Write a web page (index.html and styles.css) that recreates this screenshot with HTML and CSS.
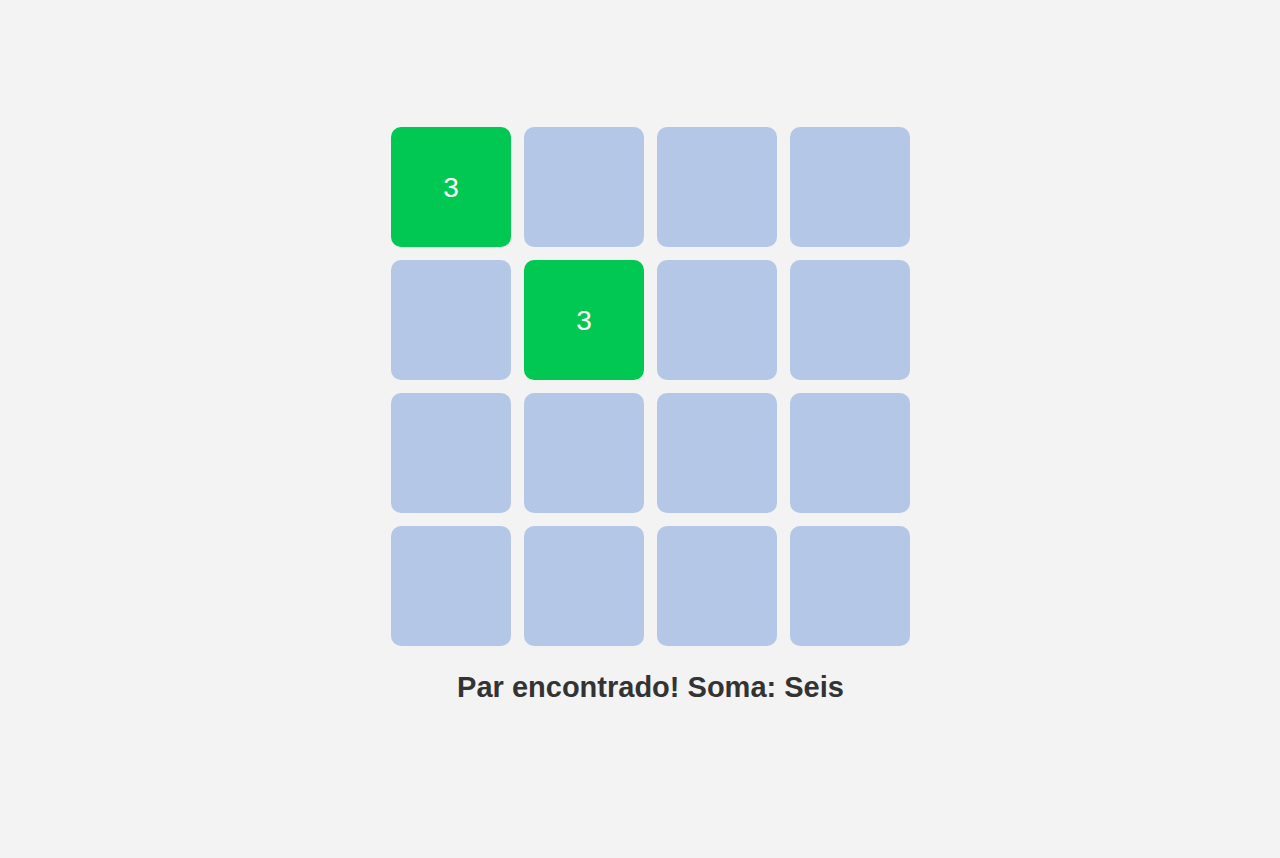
FILE: index.html
```html
<!DOCTYPE html>
<html lang="pt">
<head>
<meta charset="utf-8">
<title>Jogo da Memória</title>
<link rel="stylesheet" href="styles.css">
</head>
<body>
<main class="app">
  <div class="board">
    <div class="tile matched">3</div>
    <div class="tile"></div>
    <div class="tile"></div>
    <div class="tile"></div>
    <div class="tile"></div>
    <div class="tile matched">3</div>
    <div class="tile"></div>
    <div class="tile"></div>
    <div class="tile"></div>
    <div class="tile"></div>
    <div class="tile"></div>
    <div class="tile"></div>
    <div class="tile"></div>
    <div class="tile"></div>
    <div class="tile"></div>
    <div class="tile"></div>
  </div>
  <p class="message">Par encontrado! Soma: Seis</p>
</main>
</body>
</html>
```

FILE: styles.css
```css
html, body {
  margin: 0;
  padding: 0;
  background: #f3f3f3;
  font-family: "Liberation Sans", Arial, sans-serif;
}

.app {
  display: flex;
  flex-direction: column;
  align-items: center;
  padding-top: 127px;
  padding-left: 21px;
}

.board {
  display: grid;
  grid-template-columns: repeat(4, 120px);
  grid-auto-rows: 120px;
  gap: 13px;
}

.tile {
  background: #b4c7e7;
  border-radius: 10px;
  display: flex;
  align-items: center;
  justify-content: center;
  padding-top: 2px;
  box-sizing: border-box;
  color: #ffffff;
  font-size: 28px;
}

.tile.matched {
  background: #00c853;
}

.message {
  margin: 25px 0 0;
  font-size: 29px;
  font-weight: bold;
  color: #333333;
}
```
